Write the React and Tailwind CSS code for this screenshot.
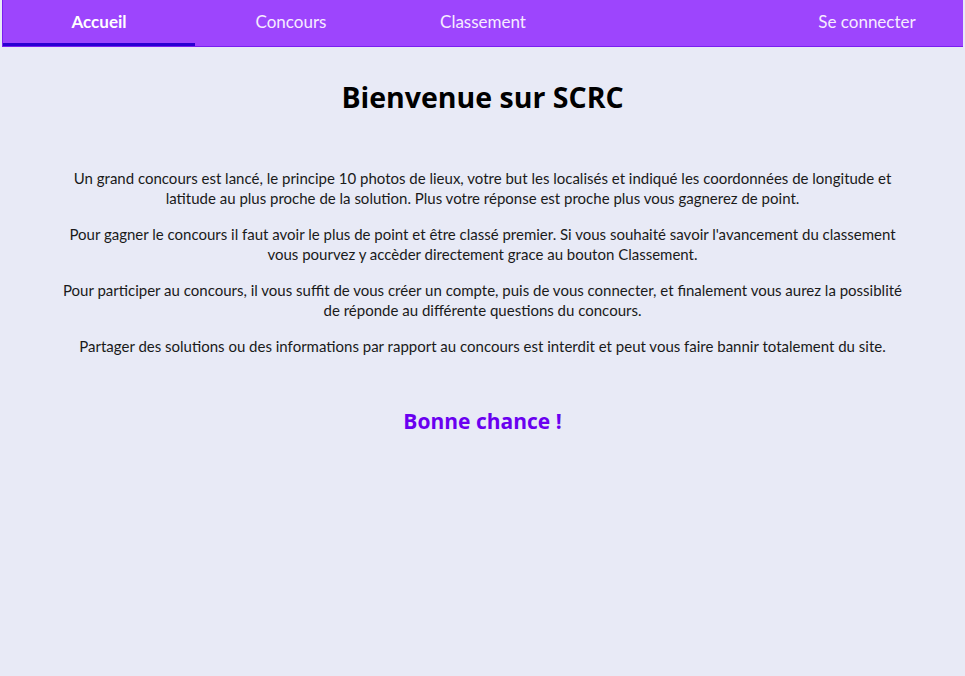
export default function App() {
  const tabs = [
    { label: "Accueil", active: true },
    { label: "Concours" },
    { label: "Classement" },
    null,
    { label: "Se connecter" },
  ];

  return (
    <div className="min-h-[676px] bg-[#e8eaf6] font-['Lato',sans-serif]">
      {/* Navbar */}
      <div className="px-[2px]">
        <nav className="grid grid-cols-5 h-[47px] bg-[#9d45fd] border-l border-b border-[#7a1ff0]">
          {tabs.map((t, i) =>
            t ? (
              <a
                key={i}
                className={`flex items-center justify-center text-[17px] border-b-[3px] ${
                  t.active
                    ? "font-bold text-white border-[#2a00d2]"
                    : "text-[#f6ecff] border-transparent"
                }`}
              >
                {t.label}
              </a>
            ) : (
              <div key={i} />
            )
          )}
        </nav>
      </div>

      {/* Content */}
      <main className="flex flex-col items-center text-center">
        <h1 className="mt-[32px] text-[28.5px] font-bold text-black font-['Open_Sans',sans-serif] leading-[36px]">
          Bienvenue sur SCRC
        </h1>

        <div className="mt-[53px] w-[848px] text-[15px] leading-[20px] text-[#1a1a1a] flex flex-col gap-[16px]">
          <p>
            Un grand concours est lancé, le principe 10 photos de lieux, votre but les localisés et indiqué les coordonnées de longitude et latitude au plus proche de la solution. Plus votre réponse est proche plus vous gagnerez de point.
          </p>
          <p>
            Pour gagner le concours il faut avoir le plus de point et être classé premier. Si vous souhaité savoir l'avancement du classement vous pourvez y accèder directement grace au bouton Classement.
          </p>
          <p>
            Pour participer au concours, il vous suffit de vous créer un compte, puis de vous connecter, et finalement vous aurez la possiblité de réponde au différente questions du concours.
          </p>
          <p>
            Partager des solutions ou des informations par rapport au concours est interdit et peut vous faire bannir totalement du site.
          </p>
        </div>

        <h2 className="mt-[50px] text-[21px] font-bold text-[#6a00f0] font-['Open_Sans',sans-serif]">
          Bonne chance !
        </h2>
      </main>
    </div>
  );
}
